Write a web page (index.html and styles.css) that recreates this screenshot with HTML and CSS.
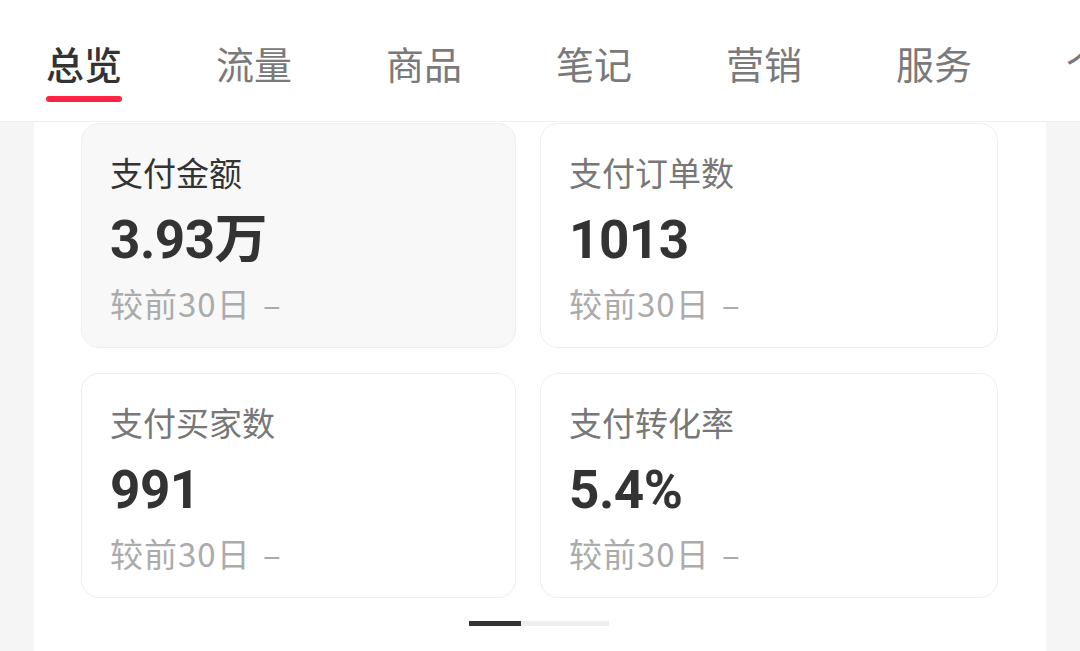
FILE: index.html
```html
<!DOCTYPE html>
<html lang="zh-CN">
<head>
<meta charset="utf-8">
<title>数据总览</title>
<link rel="stylesheet" href="styles.css">
</head>
<body>
<header class="tabbar">
  <nav class="tabs">
    <div class="tab active">总览<span class="underline"></span></div>
    <div class="tab">流量</div>
    <div class="tab">商品</div>
    <div class="tab">笔记</div>
    <div class="tab">营销</div>
    <div class="tab">服务</div>
    <div class="tab">个人</div>
  </nav>
</header>
<main class="page">
  <section class="panel">
    <div class="grid">
      <div class="card selected">
        <div class="label">支付金额</div>
        <div class="value">3.93万</div>
        <div class="sub">较前30日 <span class="dash">–</span></div>
      </div>
      <div class="card">
        <div class="label">支付订单数</div>
        <div class="value">1013</div>
        <div class="sub">较前30日 <span class="dash">–</span></div>
      </div>
      <div class="card">
        <div class="label">支付买家数</div>
        <div class="value">991</div>
        <div class="sub">较前30日 <span class="dash">–</span></div>
      </div>
      <div class="card">
        <div class="label">支付转化率</div>
        <div class="value">5.4%</div>
        <div class="sub">较前30日 <span class="dash">–</span></div>
      </div>
    </div>
    <div class="indicator"><span class="thumb"></span></div>
  </section>
</main>
</body>
</html>
```
FILE: styles.css
```css
html, body {
  margin: 0;
  padding: 0;
}
body {
  width: 1080px;
  height: 651px;
  overflow: hidden;
  background: #f5f5f5;
  font-family: "Noto Sans CJK SC", "Noto Sans", sans-serif;
}
.tabbar {
  height: 122px;
  background: #fff;
  border-bottom: 1px solid #efefef;
  box-sizing: border-box;
  overflow: hidden;
  position: relative;
  z-index: 2;
}
.tabs {
  display: flex;
  gap: 94px;
  padding-left: 46px;
  padding-top: 37px;
  white-space: nowrap;
}
.tab {
  position: relative;
  font-size: 38px;
  line-height: 52px;
  color: #7a7a7a;
  flex: none;
}
.tab.active {
  color: #333;
  font-weight: 500;
}
.underline {
  position: absolute;
  left: 0;
  right: 0;
  top: 59px;
  height: 6px;
  border-radius: 3px;
  background: #ff2442;
}
.page {
  padding: 0 34px;
}
.panel {
  background: #fff;
  height: 529px;
  padding: 1px 0 0 47px;
  box-sizing: border-box;
}
.grid {
  display: grid;
  grid-template-columns: 435px 458px;
  grid-template-rows: 225px 225px;
  column-gap: 24px;
  row-gap: 25px;
}
.card {
  border: 1px solid #eeeeee;
  border-radius: 18px;
  background: #fff;
  padding: 27px 0 0 28px;
  box-sizing: border-box;
}
.card.selected {
  background: #f8f8f8;
}
.label {
  font-size: 33px;
  line-height: 42px;
  color: #777;
}
.card.selected .label {
  color: #333;
}
.value {
  margin-top: 25px;
  font-family: "Roboto", "Liberation Sans", "Noto Sans CJK SC", sans-serif;
  font-weight: 700;
  font-size: 53px;
  line-height: 44px;
  letter-spacing: -0.5px;
  color: #333;
}
.sub {
  margin-top: 20px;
  font-size: 33px;
  line-height: 42px;
  letter-spacing: 1px;
  color: #ababab;
}
.dash {
  margin-left: 4px;
}
.indicator {
  width: 140px;
  height: 5px;
  margin: 23px 0 0 388px;
  background: #eeeeee;
  display: flex;
}
.thumb {
  width: 52px;
  height: 5px;
  background: #333;
}
```
